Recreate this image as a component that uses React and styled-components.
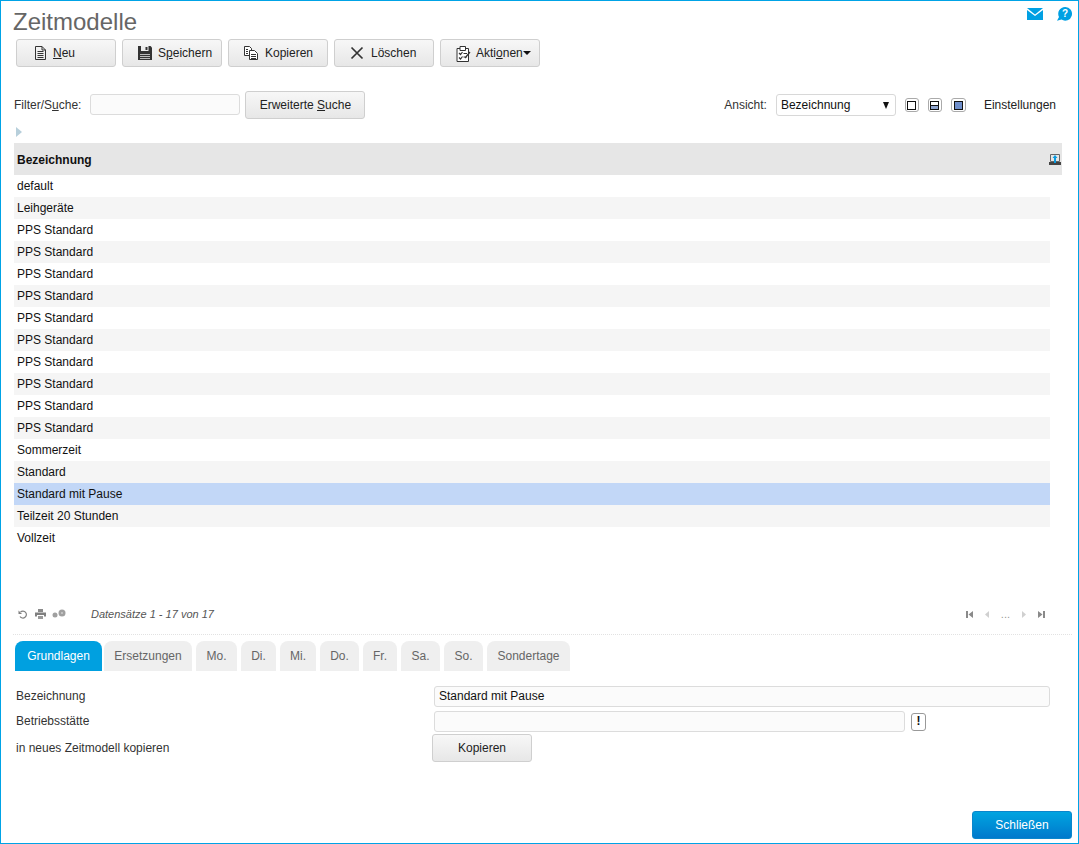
import React from 'react';
import styled, { createGlobalStyle } from 'styled-components';

const Global = createGlobalStyle`
  html, body { margin: 0; padding: 0; background: #fff; }
  body { font-family: "Liberation Sans", Arial, sans-serif; font-size: 12px; color: #222; }
  * { box-sizing: border-box; }
`;

const Page = styled.div`
  width: 1079px;
  height: 844px;
  border: 1px solid #00a3e6;
  display: flex;
  flex-direction: column;
  overflow: hidden;
`;
const TitleRow = styled.div`
  display: flex;
  justify-content: space-between;
  align-items: flex-start;
  padding: 7px 6px 0 12px;
`;
const Title = styled.h1`
  margin: 0;
  font-size: 24px;
  line-height: 28px;
  font-weight: 400;
  color: #666;
`;
const TopIcons = styled.div`
  display: flex;
  align-items: center;
  gap: 14px;
  margin-top: -1px;
`;
const Toolbar = styled.div`
  display: flex;
  gap: 6px;
  padding-left: 15px;
  margin-top: 3px;
`;
const Button = styled.button`
  width: ${p => p.$w || 100}px;
  height: 28px;
  display: inline-flex;
  align-items: center;
  justify-content: ${p => p.$left ? 'flex-start' : 'center'};
  padding: ${p => p.$left ? `0 0 0 ${p.$left}px` : '0'};
  gap: ${p => p.$gap ?? 6}px;
  border: 1px solid #cfcfcf;
  border-radius: 3px;
  background: linear-gradient(#f7f7f7, #e7e7e7);
  font: 12px "Liberation Sans", Arial, sans-serif;
  color: #222;
  margin-left: ${p => p.$ml || 0}px;
  u { text-underline-offset: 1px; }
`;
const FilterRow = styled.div`
  display: flex;
  align-items: center;
  justify-content: space-between;
  padding: 0 22px 0 13px;
  margin-top: 24px;
  height: 28px;
`;
const Group = styled.div`
  display: flex;
  align-items: center;
  gap: ${p => p.$gap || 0}px;
`;
const Label = styled.span`
  color: #333;
`;
const Field = styled.div`
  width: ${p => p.$w ? `${p.$w}px` : '100%'};
  height: 21px;
  border: 1px solid #dcdcdc;
  border-radius: 3px;
  background: #fbfbfb;
  margin-left: ${p => p.$ml || 0}px;
  margin-bottom: ${p => p.$mb || 0}px;
  padding: 0 4px;
  line-height: 19px;
  color: #111;
`;
const Select = styled.div`
  width: 120px;
  height: 22px;
  margin-left: 9px;
  border: 1px solid #d8d8d8;
  border-radius: 3px;
  background: #fff;
  display: flex;
  align-items: center;
  justify-content: space-between;
  padding: 0 6px 0 4px;
  color: #111;
`;
const Caret = styled.span`
  width: 0; height: 0;
  border-left: 3px solid transparent;
  border-right: 3px solid transparent;
  border-top: 7px solid #111;
`;
const MenuCaret = styled.span`
  width: 0; height: 0;
  margin-left: -5px;
  border-left: 4px solid transparent;
  border-right: 4px solid transparent;
  border-top: 4px solid #111;
`;
const ViewBtn = styled.span`
  width: ${p => p.$w || 14}px;
  height: 14px;
  margin-left: 9px;
  border: 1px solid #aaa;
  border-radius: 3px;
  display: flex;
  align-items: center;
  justify-content: center;
  background: #fff;
`;
const ViewInner = styled.span`
  display: block;
  width: 9px;
  height: 9px;
  border: 1px solid #111;
  background: ${p => p.$mode === 'full' ? '#6f8fcb' : p.$mode === 'half' ? 'linear-gradient(#fff 0 3px, #111 3px 4px, #8fa5cf 4px)' : '#fff'};
`;
const Settings = styled.span`
  margin-left: 18px;
  color: #222;
`;
const ArrowRow = styled.div`
  height: 24px;
  padding: 8px 0 0 15px;
`;
const TreeArrow = styled.span`
  display: block;
  width: 0; height: 0;
  border-left: 6px solid #b7cfdb;
  border-top: 5.5px solid transparent;
  border-bottom: 5.5px solid transparent;
`;
const TableHead = styled.div`
  height: 32px;
  margin: 0 16px 0 13px;
  background: #e6e6e6;
  display: flex;
  align-items: center;
  justify-content: space-between;
  padding: 1px 1px 0 3px;
  font-weight: 700;
  color: #111;
`;
const Rows = styled.div`
  margin: 0 28px 0 13px;
  height: 429px;
`;
const Row = styled.div`
  height: 22px;
  line-height: 22px;
  padding-left: 3px;
  color: #111;
  background: ${p => p.$selected ? '#c2d7f7' : p.$alt ? '#f5f5f5' : '#fff'};
`;
const Footer = styled.div`
  height: 20px;
  display: flex;
  align-items: center;
  justify-content: space-between;
  padding: 0 32px 0 16px;
`;
const FooterInfo = styled.span`
  margin-left: 19px;
  font-size: 11px;
  font-style: italic;
  color: #555;
`;
const Pager = styled.div`
  display: flex;
  align-items: center;
  gap: 9px;
  font-size: 11px;
  color: #999;
`;
const PagerSvg = styled.svg`
  color: ${p => p.$dim ? '#d0d0d0' : '#8a8a8a'};
`;
const Divider = styled.div`
  margin: 10px 6px 0 12px;
  border-top: 1px dotted #e2e2e2;
`;
const Tabs = styled.div`
  display: flex;
  padding-left: 14px;
  margin-top: 6px;
`;
const Tab = styled.div`
  width: ${p => p.$w}px;
  height: 30px;
  line-height: 31px;
  text-align: center;
  margin-right: ${p => p.$mr ?? 4}px;
  border-radius: 8px 8px 0 0;
  background: ${p => p.$active ? '#00a0e0' : '#efefef'};
  color: ${p => p.$active ? '#fff' : '#666'};
`;
const Form = styled.div`
  display: grid;
  grid-template-columns: 418px 616px;
  padding-left: 15px;
  margin-top: 15px;
  align-items: center;
`;
const FormLabel = styled.span`
  color: #333;
  margin-bottom: ${p => p.$mb || 0}px;
`;
const FormCell = styled.div`
  display: flex;
  align-items: center;
  margin-bottom: ${p => p.$mb || 0}px;
`;
const Bang = styled.span`
  width: 15px;
  height: 18px;
  margin-left: 6px;
  border: 1px solid #999;
  border-radius: 3px;
  text-align: center;
  line-height: 15px;
  font-weight: 700;
  color: #111;
`;
const Bottom = styled.div`
  margin-top: auto;
  padding: 0 6px 4px 0;
  display: flex;
  justify-content: flex-end;
`;
const PrimaryButton = styled.button`
  width: 100px;
  height: 28px;
  border: 1px solid #0a86cc;
  border-radius: 3px;
  background: linear-gradient(#00a4e0, #0079cc);
  color: #fff;
  font: 12px "Liberation Sans", Arial, sans-serif;
`;

const Ico = ({ w = 16, h = 16, children }) => (
  <svg width={w} height={h} viewBox={`0 0 ${w} ${h}`}>{children}</svg>
);
const IconDoc = () => (
  <Ico w={13} h={16}>
    <path d="M1.500 1.500h6.500l3.500 3.500v9.500h-10z M8 1.500v3.500h3.500" fill="none" stroke="#333" />
    <path d="M3.500 6.500h6M3.500 8.500h6M3.500 10.500h6M3.500 12.500h6" stroke="#333" />
  </Ico>
);
const IconSave = () => (
  <Ico w={14} h={14}>
    <path d="M0 0h12.500L14 1.500V14H0z" fill="#333" />
    <path d="M3 0h7.500v5H3z" fill="#eee" />
    <path d="M7.500 1h2v3h-2z" fill="#333" />
    <path d="M2 8h10v1H2zM2 10h10v1H2zM2 12h10v1H2z" fill="#bbb" />
  </Ico>
);
const IconCopy = () => (
  <Ico w={16} h={14}>
    <path d="M1.500 .500h5l2 2v7h-7z" fill="#fff" stroke="#333" />
    <path d="M6.500 4.500h5l3 3v6h-8z" fill="#fff" stroke="#333" />
    <path d="M8 8.500h5M8 10.500h5M8 12.500h5M3 3.500h2M3 5.500h2M3 7.500h2" stroke="#333" />
  </Ico>
);
const IconX = () => (
  <Ico w={14} h={14}>
    <path d="M1.500 1.500L12.500 12.500M12.500 1.500L1.500 12.500" stroke="#333" strokeWidth="1.700" />
  </Ico>
);
const IconClip = () => (
  <Ico w={15} h={17}>
    <path d="M1 3.500h11.500v13H1z" fill="#fff" stroke="#333" />
    <path d="M4 1.500h5.500v4H4z" fill="#fff" stroke="#333" />
    <path d="M3 8l1.500 1.500 2-2.500M3 12.500l1.500 1.500 2-2.500M7.500 8.500h3.500M7.500 12h3.500M14 7l-5 6" fill="none" stroke="#333" strokeWidth="1.200" />
  </Ico>
);
const IconMail = () => (
  <Ico w={16} h={12}>
    <path d="M0 0h16L8 6.500z" fill="#00a0e3" />
    <path d="M0 2l8 6 8-6v10H0z" fill="#00a0e3" />
  </Ico>
);
const IconHelp = () => (
  <Ico w={15} h={14}>
    <path d="M8 0a6.800 6.800 0 1 1-3.500 12.500L0 13.800 2 10A6.800 6.800 0 0 1 8 0z" fill="#00a0e3" />
    <text x="8" y="10" fontSize="10" fontWeight="700" fill="#fff" textAnchor="middle" fontFamily="Liberation Sans">?</text>
  </Ico>
);
const IconExport = () => (
  <Ico w={12} h={11}>
    <path d="M1.500 .500h9v7h-9z" fill="#e6e6e6" stroke="#666" />
    <path d="M0 8h12v3H0z" fill="#444" />
    <path d="M6 1l2.500 3H7v5H5V4H3.500z" fill="#0a9be0" />
  </Ico>
);
const IconRefresh = () => (
  <Ico w={12} h={11}>
    <path d="M3.500 3a3.500 3.500 0 1 1-.5 4.500" fill="none" stroke="#808080" strokeWidth="1.200" />
    <path d="M1.500 1.500v3.500h3.500z" fill="#808080" />
  </Ico>
);
const IconPrint = () => (
  <Ico w={11} h={10}>
    <path d="M3 0h5v3H3z" fill="#8a8a8a" />
    <path d="M0 3.500h11v4H9V6H2v1.500H0z" fill="#808080" />
    <path d="M3 7h5v3H3z" fill="#999" />
  </Ico>
);
const IconGears = () => (
  <Ico w={14} h={10}>
    <circle cx="3" cy="6" r="2.500" fill="#a0a0a0" />
    <circle cx="10" cy="4" r="3.500" fill="#a0a0a0" />
    <circle cx="10" cy="4" r="1" fill="#ccc" />
  </Ico>
);
const PagerIcon = ({ d, dim }) => (
  <PagerSvg $dim={dim} width={9} height={9} viewBox="0 0 9 9"><path d={d} fill="currentColor" /></PagerSvg>
);

const names = ['default', 'Leihgeräte', ...Array(10).fill('PPS Standard'), 'Sommerzeit', 'Standard', 'Standard mit Pause', 'Teilzeit 20 Stunden', 'Vollzeit'];
const tabs = [['Ersetzungen', 88], ['Mo.', 41], ['Di.', 35], ['Mi.', 36], ['Do.', 39], ['Fr.', 34], ['Sa.', 39], ['So.', 39], ['Sondertage', 83]];

export default function App() {
  return (
    <Page>
      <Global />
      <TitleRow>
        <Title>Zeitmodelle</Title>
        <TopIcons><IconMail /><IconHelp /></TopIcons>
      </TitleRow>
      <Toolbar>
        <Button $left={17} $gap={6}><IconDoc /><span><u>N</u>eu</span></Button>
        <Button $left={15} $gap={6}><IconSave /><span>S<u>p</u>eichern</span></Button>
        <Button $left={14} $gap={6}><IconCopy /><span>Kopieren</span></Button>
        <Button $left={15} $gap={7}><IconX /><span>Löschen</span></Button>
        <Button $left={15} $gap={5}><IconClip /><span>Akti<u>o</u>nen</span><MenuCaret /></Button>
      </Toolbar>
      <FilterRow>
        <Group>
          <Label>Filter/S<u>u</u>che:</Label>
          <Field $w={150} $ml={9} $mb={1} />
          <Button $w={120} $ml={5}><span>Erweiterte <u>S</u>uche</span></Button>
        </Group>
        <Group>
          <Label>Ansicht:</Label>
          <Select>Bezeichnung<Caret /></Select>
          <ViewBtn><ViewInner /></ViewBtn>
          <ViewBtn><ViewInner $mode="half" /></ViewBtn>
          <ViewBtn $w={15}><ViewInner $mode="full" /></ViewBtn>
          <Settings>Einstellungen</Settings>
        </Group>
      </FilterRow>
      <ArrowRow><TreeArrow /></ArrowRow>
      <TableHead>Bezeichnung<IconExport /></TableHead>
      <Rows>
        {names.map((n, i) => (
          <Row key={i} $alt={i % 2 === 1} $selected={n === 'Standard mit Pause'}>{n}</Row>
        ))}
      </Rows>
      <Footer>
        <Group $gap={6}>
          <IconRefresh /><IconPrint /><IconGears />
          <FooterInfo>Datensätze 1 - 17 von 17</FooterInfo>
        </Group>
        <Pager>
          <PagerIcon d="M1 1h2v7H1zM8 1v7L3.500 4.500z" />
          <PagerIcon dim d="M6 1v7L2 4.500z" />
          <span>...</span>
          <PagerIcon dim d="M3 1v7l4-3.500z" />
          <PagerIcon d="M1 1v7l4.500-3.500zM6 1h2v7H6z" />
        </Pager>
      </Footer>
      <Divider />
      <Tabs>
        <Tab $active $w={87} $mr={2}>Grundlagen</Tab>
        {tabs.map(([t, w]) => <Tab key={t} $w={w}>{t}</Tab>)}
      </Tabs>
      <Form>
        <FormLabel $mb={6}>Bezeichnung</FormLabel>
        <FormCell $mb={4}><Field>Standard mit Pause</Field></FormCell>
        <FormLabel $mb={4}>Betriebsstätte</FormLabel>
        <FormCell $mb={2}><Field $w={471} /><Bang>!</Bang></FormCell>
        <FormLabel>in neues Zeitmodell kopieren</FormLabel>
        <FormCell><Button $ml={-2}>Kopieren</Button></FormCell>
      </Form>
      <Bottom><PrimaryButton>Schließen</PrimaryButton></Bottom>
    </Page>
  );
}
